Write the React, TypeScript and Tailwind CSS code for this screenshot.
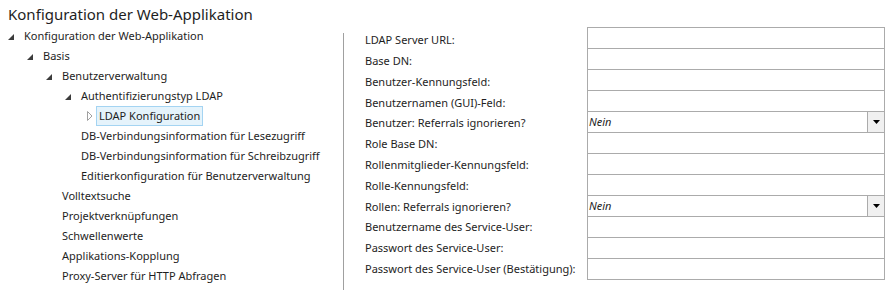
import React from 'react';

type Node = { label: string; level: number; expander?: 'open' | 'closed'; selected?: boolean };

const tree: Node[] = [
  { label: 'Konfiguration der Web-Applikation', level: 0, expander: 'open' },
  { label: 'Basis', level: 1, expander: 'open' },
  { label: 'Benutzerverwaltung', level: 2, expander: 'open' },
  { label: 'Authentifizierungstyp LDAP', level: 3, expander: 'open' },
  { label: 'LDAP Konfiguration', level: 4, expander: 'closed', selected: true },
  { label: 'DB-Verbindungsinformation für Lesezugriff', level: 3 },
  { label: 'DB-Verbindungsinformation für Schreibzugriff', level: 3 },
  { label: 'Editierkonfiguration für Benutzerverwaltung', level: 3 },
  { label: 'Volltextsuche', level: 2 },
  { label: 'Projektverknüpfungen', level: 2 },
  { label: 'Schwellenwerte', level: 2 },
  { label: 'Applikations-Kopplung', level: 2 },
  { label: 'Proxy-Server für HTTP Abfragen', level: 2 },
];

const fields: { label: string; select?: boolean }[] = [
  { label: 'LDAP Server URL:' },
  { label: 'Base DN:' },
  { label: 'Benutzer-Kennungsfeld:' },
  { label: 'Benutzernamen (GUI)-Feld:' },
  { label: 'Benutzer: Referrals ignorieren?', select: true },
  { label: 'Role Base DN:' },
  { label: 'Rollenmitglieder-Kennungsfeld:' },
  { label: 'Rolle-Kennungsfeld:' },
  { label: 'Rollen: Referrals ignorieren?', select: true },
  { label: 'Benutzername des Service-User:' },
  { label: 'Passwort des Service-User:' },
  { label: 'Passwort des Service-User (Bestätigung):' },
];

const indent = ['pl-[7px]', 'pl-[26px]', 'pl-[45px]', 'pl-[64px]', 'pl-[86px]'];

function Expander({ kind }: { kind?: 'open' | 'closed' }) {
  if (!kind) return <span className="w-[17px] shrink-0" />;
  return (
    <span className="w-[17px] h-[20px] shrink-0 flex items-center">
      {kind === 'open' ? (
        <svg width="6" height="6" viewBox="0 0 6 6" className="ml-[1px] mt-[1px]">
          <path d="M6 0 L6 6 L0 6 Z" fill="#3c3c3c" />
        </svg>
      ) : (
        <svg width="6" height="10" viewBox="0 0 6 10" className="ml-[1px]">
          <path d="M0.5 0.5 L5 5 L0.5 9.5 Z" fill="none" stroke="#a0a0a0" />
        </svg>
      )}
    </span>
  );
}

function TreeRow({ node }: { node: Node }) {
  return (
    <div className={`flex items-center h-[20px] whitespace-nowrap ${indent[node.level]}`}>
      <Expander kind={node.expander} />
      {node.selected ? (
        <span className="h-[20px] -ml-[7px] px-[2px] flex items-center bg-[#e5f3fb] border border-[#a4d4f2]">
          {node.label}
        </span>
      ) : (
        <span>{node.label}</span>
      )}
    </div>
  );
}

function Field({ select }: { select?: boolean }) {
  return (
    <div className="h-[22px] border border-[#ababab] -mt-[1px] first:mt-0 bg-white flex">
      {select ? (
        <>
          <div className="flex-1 italic pl-[1px] flex items-center">Nein</div>
          <div className="w-[17px] border-l border-[#ababab] bg-[#f0f0f0] flex items-center justify-center">
            <svg width="7" height="4" viewBox="0 0 7 4">
              <path d="M0 0 L7 0 L3.5 4 Z" fill="#000" />
            </svg>
          </div>
        </>
      ) : null}
    </div>
  );
}

export default function App() {
  return (
    <div className="w-[893px] h-[290px] bg-white text-[#1e1e1e] text-[11px] overflow-hidden font-['Noto_Sans',sans-serif]">
      <h1 className="h-[26px] pl-[8px] pt-[3px] text-[15px] leading-[22px] whitespace-nowrap">
        Konfiguration der Web-Applikation
      </h1>
      <div className="flex">
        <div className="w-[343px] shrink-0">
          {tree.map((n) => (
            <TreeRow key={n.label} node={n} />
          ))}
        </div>
        <div className="w-px bg-[#a0a0a0] mt-[7px] h-[258px]" />
        <div className="flex pl-[21px]">
          <div className="w-[222px] pt-[4px]">
            {fields.map((f) => (
              <div key={f.label} className="h-[20.8px] flex items-center whitespace-nowrap">
                {f.label}
              </div>
            ))}
          </div>
          <div className="w-[298px] pt-[1px]">
            {fields.map((f) => (
              <Field key={f.label} select={f.select} />
            ))}
          </div>
        </div>
      </div>
    </div>
  );
}
